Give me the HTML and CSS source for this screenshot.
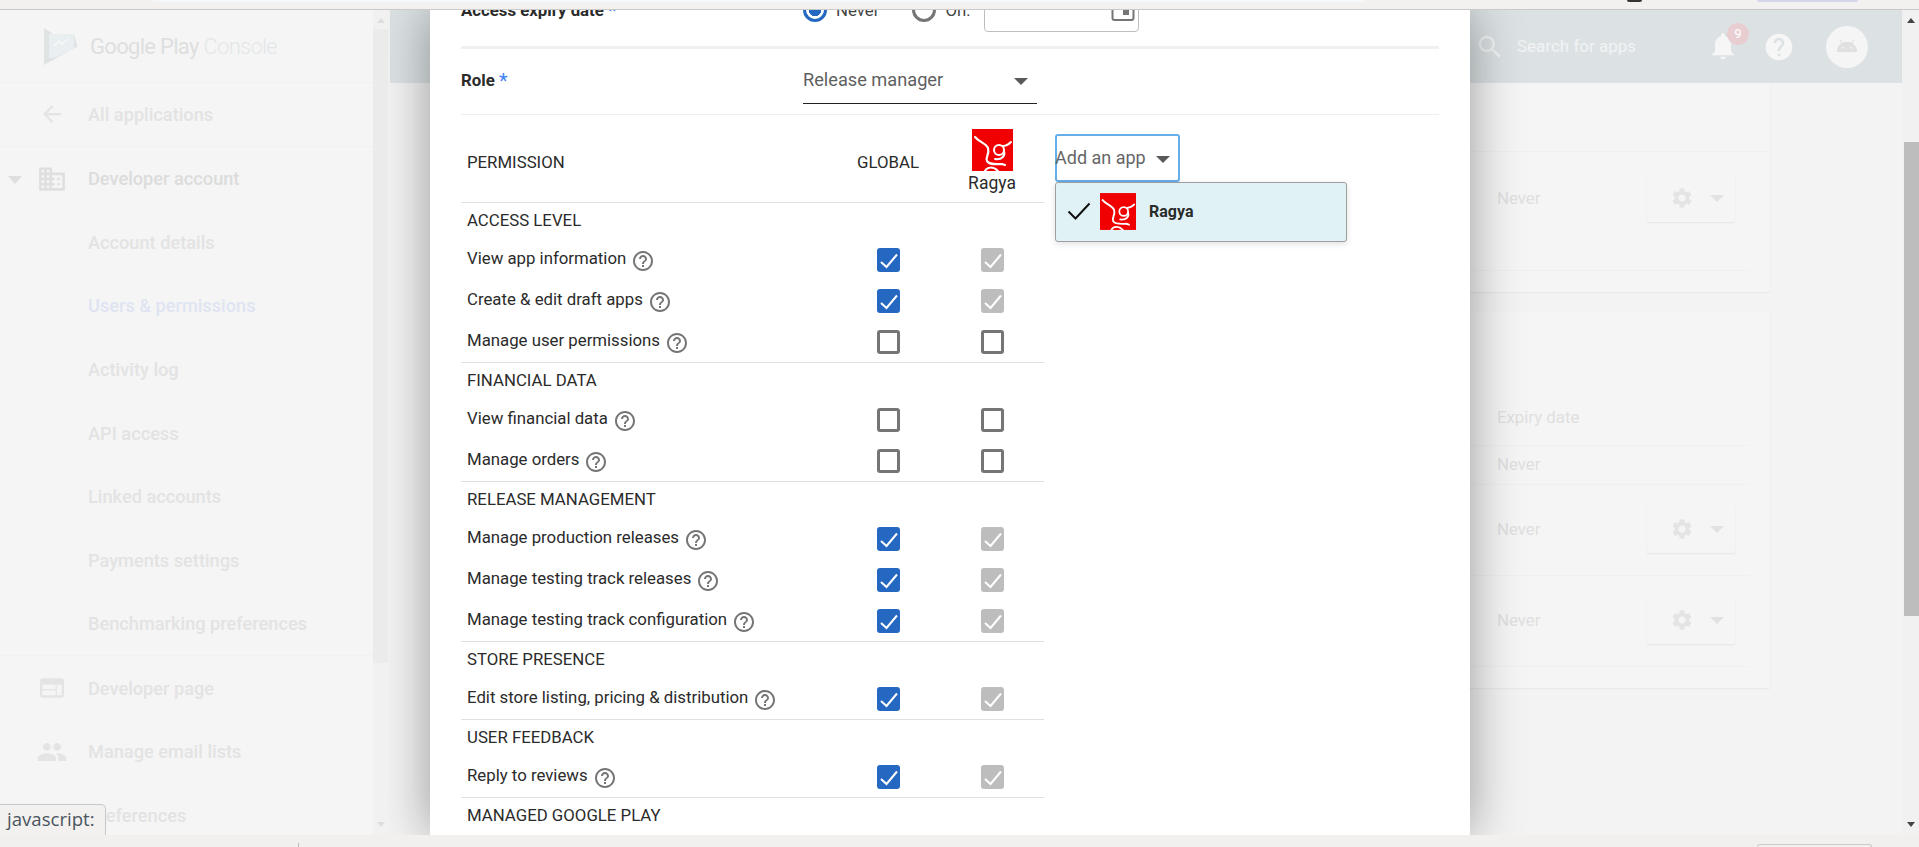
FILE: index.html
```html
<!DOCTYPE html>
<html lang="en">
<head>
    <meta charset="UTF-8">
    <meta name="viewport" content="width=device-width, initial-scale=1.0">
    <title>Users &amp; permissions</title>
    <link rel="stylesheet" href="styles.css">
</head>
<body>
    <svg class="sprite" width="0" height="0">
        <symbol id="help" viewBox="0 0 24 24"><path d="M11 18h2v-2h-2v2zm1-16C6.48 2 2 6.48 2 12s4.48 10 10 10 10-4.48 10-10S17.52 2 12 2zm0 18c-4.41 0-8-3.59-8-8s3.59-8 8-8 8 3.59 8 8-3.59 8-8 8zm0-14c-2.21 0-4 1.79-4 4h2c0-1.1.9-2 2-2s2 .9 2 2c0 2-3 1.75-3 5h2c0-2.25 3-2.5 3-5 0-2.21-1.79-4-4-4z"/></symbol>
        <symbol id="tick" viewBox="0 0 23 24"><path d="M4 14l5.5 5L20 6.5" fill="none" stroke="#fff" stroke-width="2"/></symbol>
        <symbol id="gear" viewBox="0 0 24 24"><path d="M19.14 12.94c.04-.3.06-.61.06-.94 0-.32-.02-.64-.07-.94l2.03-1.58c.18-.14.23-.41.12-.61l-1.92-3.32c-.12-.22-.37-.29-.59-.22l-2.39.96c-.5-.38-1.03-.7-1.62-.94l-.36-2.54c-.04-.24-.24-.41-.48-.41h-3.84c-.24 0-.43.17-.47.41l-.36 2.54c-.59.24-1.13.57-1.62.94l-2.39-.96c-.22-.08-.47 0-.59.22L2.74 8.87c-.12.21-.08.47.12.61l2.03 1.58c-.05.3-.09.63-.09.94s.02.64.07.94l-2.03 1.58c-.18.14-.23.41-.12.61l1.92 3.32c.12.22.37.29.59.22l2.39-.96c.5.38 1.03.7 1.62.94l.36 2.54c.05.24.24.41.48.41h3.84c.24 0 .44-.17.47-.41l.36-2.54c.59-.24 1.13-.56 1.62-.94l2.39.96c.22.08.47 0 .59-.22l1.92-3.32c.12-.22.07-.47-.12-.61l-2.01-1.58zM12 15.6c-1.98 0-3.6-1.62-3.6-3.6s1.62-3.6 3.6-3.6 3.6 1.62 3.6 3.6-1.62 3.6-3.6 3.6z"/></symbol>
        <symbol id="ragya" viewBox="0 0 41 42">
            <rect width="41" height="42" fill="#f00000"/>
            <g fill="none" stroke="#fff" stroke-linecap="round">
                <path d="M3 8c4 5 11 6 13 11 2 6-3 9-1 13 2 4 9 3 15 3l3 1" stroke-width="2.2"/>
                <circle cx="27" cy="21" r="5" stroke-width="2"/>
                <path d="M31 17c4 0 6-2 8-4" stroke-width="2"/>
                <path d="M32 22c1.5 5-2 9-9 8" stroke-width="2"/>
                <path d="M13 42c2-4 8-5 13 0" stroke-width="2"/>
            </g>
        </symbol>
    </svg>

    <div class="browser-top">
        <span class="url-edge"></span>
        <span class="ext-dark"></span>
        <span class="ext-pill"></span>
    </div>

    <div class="main">
        <aside class="sidebar">
            <nav class="side-nav">
                <div class="side-logo">
                    <svg class="play-logo" width="34" height="37" viewBox="0 0 34 37">
                        <path d="M0 0l9 6h21l3.5 12.5L9 32l-9 5z" fill="#e0e3e4"/>
                        <path d="M5 6h25v15L10 30H5z" fill="#e9eef0"/>
                        <path d="M10 18l5-5 3 3 6-5" fill="none" stroke="#f7f8f8" stroke-width="1.5"/>
                    </svg>
                    <span class="logo-text">Google Play <span class="logo-light">Console</span></span>
                </div>
                <a class="side-item side-rule">
                    <svg class="side-icon" width="27" height="27" viewBox="0 0 24 24"><path d="M20 11H7.83l5.59-5.59L12 4l-8 8 8 8 1.41-1.41L7.83 13H20v-2z"/></svg>
                    <span class="side-label">All applications</span>
                </a>
                <a class="side-item side-parent">
                    <span class="side-caret"></span>
                    <svg class="side-icon" width="31" height="31" viewBox="0 0 24 24"><path d="M12 7V3H2v18h20V7H12zM6 19H4v-2h2v2zm0-4H4v-2h2v2zm0-4H4V9h2v2zm0-4H4V5h2v2zm4 12H8v-2h2v2zm0-4H8v-2h2v2zm0-4H8V9h2v2zm0-4H8V5h2v2zm10 12h-8v-2h2v-2h-2v-2h2v-2h-2V9h8v10zm-2-8h-2v2h2v-2zm0 4h-2v2h2v-2z"/></svg>
                    <span class="side-label">Developer account</span>
                </a>
                <a class="side-item"><span class="side-label">Account details</span></a>
                <a class="side-item current"><span class="side-label">Users &amp; permissions</span></a>
                <a class="side-item"><span class="side-label">Activity log</span></a>
                <a class="side-item"><span class="side-label">API access</span></a>
                <a class="side-item"><span class="side-label">Linked accounts</span></a>
                <a class="side-item"><span class="side-label">Payments settings</span></a>
                <a class="side-item side-rule"><span class="side-label">Benchmarking preferences</span></a>
                <a class="side-item">
                    <svg class="side-icon" width="29" height="29" viewBox="0 0 24 24"><path d="M20 4H4c-1.1 0-2 .9-2 2v12c0 1.1.9 2 2 2h16c1.1 0 2-.9 2-2V6c0-1.1-.9-2-2-2zm-5 14H4v-4h11v4zm0-5H4V9h11v4zm5 5h-4V9h4v9z"/></svg>
                    <span class="side-label">Developer page</span>
                </a>
                <a class="side-item">
                    <svg class="side-icon" width="31" height="31" viewBox="0 0 24 24"><path d="M16 11c1.66 0 2.99-1.34 2.99-3S17.66 5 16 5c-1.66 0-3 1.34-3 3s1.34 3 3 3zm-8 0c1.66 0 2.99-1.34 2.99-3S9.66 5 8 5C6.34 5 5 6.34 5 8s1.34 3 3 3zm0 2c-2.33 0-7 1.17-7 3.5V19h14v-2.5c0-2.33-4.67-3.5-7-3.5zm8 0c-.29 0-.62.02-.97.05 1.16.84 1.97 1.97 1.97 3.45V19h6v-2.5c0-2.33-4.67-3.5-7-3.5z"/></svg>
                    <span class="side-label">Manage email lists</span>
                </a>
                <a class="side-item"><span class="side-label">Preferences</span></a>
            </nav>
            <div class="side-scroll">
                <span class="arrow-up faint"></span>
                <span class="side-thumb"></span>
                <span class="arrow-down faint"></span>
            </div>
        </aside>

        <div class="content">
            <header class="topbar">
                <svg class="search-icon" width="30" height="30" viewBox="0 0 24 24"><path d="M15.5 14h-.79l-.28-.27C15.41 12.59 16 11.11 16 9.5 16 5.91 13.09 3 9.5 3S3 5.91 3 9.5 5.91 16 9.5 16c1.61 0 3.09-.59 4.23-1.57l.27.28v.79l5 4.99L20.49 19l-4.99-5zm-6 0C7.01 14 5 11.99 5 9.5S7.01 5 9.5 5 14 7.01 14 9.5 11.99 14 9.5 14z"/></svg>
                <span class="search-text">Search for apps</span>
                <span class="bell">
                    <svg width="32" height="32" viewBox="0 0 24 24"><path d="M12 22c1.1 0 2-.9 2-2h-4c0 1.1.89 2 2 2zm6-6v-5c0-3.07-1.64-5.64-4.5-6.32V4c0-.83-.67-1.5-1.5-1.5s-1.5.67-1.5 1.5v.68C7.63 5.36 6 7.92 6 11v5l-2 2v1h16v-1l-2-2z"/></svg>
                    <span class="badge">9</span>
                </span>
                <svg class="help-fill" width="32" height="32" viewBox="0 0 24 24"><path d="M12 2C6.48 2 2 6.48 2 12s4.48 10 10 10 10-4.48 10-10S17.52 2 12 2zm1 17h-2v-2h2v2zm2.07-7.75l-.9.92C13.45 12.9 13 13.5 13 15h-2v-.5c0-1.1.45-2.1 1.17-2.83l1.24-1.26c.37-.36.59-.86.59-1.41 0-1.1-.9-2-2-2s-2 .9-2 2H8c0-2.21 1.79-4 4-4s4 1.79 4 4c0 .88-.36 1.68-.93 2.25z"/></svg>
                <span class="avatar">
                    <svg width="22" height="14" viewBox="0 0 24 15">
                        <path d="M1 15a11 11 0 0 1 5-9.5L3.8 1.8l1-.6L7.2 5a11 11 0 0 1 9.6 0l2.4-3.8 1 .6L18 5.5a11 11 0 0 1 5 9.5z"/>
                        <circle cx="7.5" cy="10.5" r="1.2" class="android-eye"/>
                        <circle cx="16.5" cy="10.5" r="1.2" class="android-eye"/>
                    </svg>
                </span>
            </header>
            <div class="page-body">
                <section class="card">
                    <div class="card-head"></div>
                    <div class="card-row tall">
                        <span class="never">Never</span>
                        <button class="gear-btn"><svg width="24" height="24"><use href="#gear"/></svg><span class="caret faint-caret"></span></button>
                    </div>
                </section>
                <section class="card second">
                    <div class="card-row short head-row"><span class="never wide">Expiry date</span></div>
                    <div class="card-row short"><span class="never wide">Never</span></div>
                    <div class="card-row mid">
                        <span class="never">Never</span>
                        <button class="gear-btn"><svg width="24" height="24"><use href="#gear"/></svg><span class="caret faint-caret"></span></button>
                    </div>
                    <div class="card-row mid">
                        <span class="never">Never</span>
                        <button class="gear-btn"><svg width="24" height="24"><use href="#gear"/></svg><span class="caret faint-caret"></span></button>
                    </div>
                </section>
            </div>
        </div>

        <div class="page-scroll">
            <span class="arrow-up"></span>
            <span class="page-thumb"></span>
            <span class="arrow-down"></span>
        </div>

        <div class="modal">
            <div class="form-row expiry-row">
                <span class="form-label">Access expiry date <em>*</em></span>
                <span class="radio on"></span>
                <span class="radio-text">Never</span>
                <span class="radio"></span>
                <span class="radio-text last">On:</span>
                <span class="date-box">
                    <svg width="24" height="24" viewBox="0 0 24 24" fill="none"><rect x="1.5" y="-4" width="21" height="26" rx="2" stroke="#757575" stroke-width="2"/><rect x="12" y="11" width="6" height="6" fill="#757575"/></svg>
                </span>
            </div>
            <div class="form-row role-row">
                <span class="form-label">Role <em>*</em></span>
                <span class="role-select">Release manager<span class="caret"></span></span>
            </div>

            <div class="perm-area">
                <div class="perm-table">
                    <div class="perm-head">
                        <span class="perm-name">PERMISSION</span>
                        <span class="col-title">GLOBAL</span>
                        <span class="col-app">
                            <svg width="41" height="42"><use href="#ragya"/></svg>
                            <span>Ragya</span>
                        </span>
                    </div>

                    <div class="perm-group">
                        <div class="group-title">ACCESS LEVEL</div>
                        <div class="perm-row">
                            <span class="perm-name">View app information <svg class="help" width="24" height="24"><use href="#help"/></svg></span>
                            <span class="cb on"><svg width="23" height="24"><use href="#tick"/></svg></span>
                            <span class="cb grey"><svg width="23" height="24"><use href="#tick"/></svg></span>
                        </div>
                        <div class="perm-row">
                            <span class="perm-name">Create &amp; edit draft apps <svg class="help" width="24" height="24"><use href="#help"/></svg></span>
                            <span class="cb on"><svg width="23" height="24"><use href="#tick"/></svg></span>
                            <span class="cb grey"><svg width="23" height="24"><use href="#tick"/></svg></span>
                        </div>
                        <div class="perm-row">
                            <span class="perm-name">Manage user permissions <svg class="help" width="24" height="24"><use href="#help"/></svg></span>
                            <span class="cb"></span>
                            <span class="cb"></span>
                        </div>
                    </div>

                    <div class="perm-group">
                        <div class="group-title">FINANCIAL DATA</div>
                        <div class="perm-row">
                            <span class="perm-name">View financial data <svg class="help" width="24" height="24"><use href="#help"/></svg></span>
                            <span class="cb"></span>
                            <span class="cb"></span>
                        </div>
                        <div class="perm-row">
                            <span class="perm-name">Manage orders <svg class="help" width="24" height="24"><use href="#help"/></svg></span>
                            <span class="cb"></span>
                            <span class="cb"></span>
                        </div>
                    </div>

                    <div class="perm-group">
                        <div class="group-title">RELEASE MANAGEMENT</div>
                        <div class="perm-row">
                            <span class="perm-name">Manage production releases <svg class="help" width="24" height="24"><use href="#help"/></svg></span>
                            <span class="cb on"><svg width="23" height="24"><use href="#tick"/></svg></span>
                            <span class="cb grey"><svg width="23" height="24"><use href="#tick"/></svg></span>
                        </div>
                        <div class="perm-row">
                            <span class="perm-name">Manage testing track releases <svg class="help" width="24" height="24"><use href="#help"/></svg></span>
                            <span class="cb on"><svg width="23" height="24"><use href="#tick"/></svg></span>
                            <span class="cb grey"><svg width="23" height="24"><use href="#tick"/></svg></span>
                        </div>
                        <div class="perm-row">
                            <span class="perm-name">Manage testing track configuration <svg class="help" width="24" height="24"><use href="#help"/></svg></span>
                            <span class="cb on"><svg width="23" height="24"><use href="#tick"/></svg></span>
                            <span class="cb grey"><svg width="23" height="24"><use href="#tick"/></svg></span>
                        </div>
                    </div>

                    <div class="perm-group">
                        <div class="group-title">STORE PRESENCE</div>
                        <div class="perm-row">
                            <span class="perm-name">Edit store listing, pricing &amp; distribution <svg class="help" width="24" height="24"><use href="#help"/></svg></span>
                            <span class="cb on"><svg width="23" height="24"><use href="#tick"/></svg></span>
                            <span class="cb grey"><svg width="23" height="24"><use href="#tick"/></svg></span>
                        </div>
                    </div>

                    <div class="perm-group">
                        <div class="group-title">USER FEEDBACK</div>
                        <div class="perm-row">
                            <span class="perm-name">Reply to reviews <svg class="help" width="24" height="24"><use href="#help"/></svg></span>
                            <span class="cb on"><svg width="23" height="24"><use href="#tick"/></svg></span>
                            <span class="cb grey"><svg width="23" height="24"><use href="#tick"/></svg></span>
                        </div>
                    </div>

                    <div class="perm-group">
                        <div class="group-title">MANAGED GOOGLE PLAY</div>
                    </div>
                </div>

                <div class="add-app">
                    <button class="add-btn">Add an app<span class="caret"></span></button>
                    <div class="add-menu">
                        <svg class="menu-tick" width="24" height="18" viewBox="0 0 24 18"><path d="M1.5 9.5l7 7L22.5 1.5" fill="none" stroke="#111" stroke-width="2"/></svg>
                        <svg width="36" height="37" viewBox="0 0 41 42"><use href="#ragya"/></svg>
                        <span class="menu-name">Ragya</span>
                    </div>
                </div>
            </div>
        </div>

        <div class="status-tip">javascript:</div>
    </div>

    <div class="browser-bottom">
        <span class="tick-mark"></span>
        <span class="tab-edge"></span>
    </div>
</body>
</html>
```

FILE: styles.css
```css
* {
    box-sizing: border-box;
}

body {
    margin: 0;
    height: 100vh;
    display: flex;
    flex-direction: column;
    overflow: hidden;
    font-family: Roboto, Arial, sans-serif;
    background-color: #f3f3f3;
    color: #2b2b2b;
}

.sprite {
    position: absolute;
}

/* browser chrome */
.browser-top {
    height: 10px;
    flex: none;
    display: flex;
    align-items: flex-start;
    background-color: #f2f1ef;
    border-bottom: 1px solid #c9c9c9;
}

.url-edge {
    width: 1212px;
    height: 2px;
    margin-left: 153px;
    background-color: #f5f7f8;
}

.ext-dark {
    width: 15px;
    height: 2px;
    margin-left: 262px;
    border-radius: 0 0 4px 4px;
    background-color: #333;
}

.ext-pill {
    width: 101px;
    height: 2px;
    margin-left: 115px;
    border-radius: 0 0 6px 6px;
    background-color: #d5d6ea;
}

.browser-bottom {
    height: 12px;
    flex: none;
    display: flex;
    align-items: flex-end;
    background-color: #f1f0ee;
}

.tick-mark {
    width: 1px;
    height: 4px;
    margin-left: 298px;
    background-color: #bbb;
}

.tab-edge {
    width: 115px;
    height: 3px;
    margin-left: 1458px;
    border: 1px solid #ccc;
    border-bottom: none;
    border-radius: 4px 4px 0 0;
}

.main {
    flex: 1;
    min-height: 0;
    display: flex;
    position: relative;
    overflow: hidden;
}

/* sidebar */
.sidebar {
    width: 388px;
    flex: none;
    display: flex;
    position: relative;
    z-index: 2;
    background-color: #f5f5f5;
}

.side-nav {
    width: 373px;
    flex: none;
}

.side-logo {
    height: 73px;
    display: flex;
    align-items: center;
    padding-left: 44px;
    border-bottom: 1px solid #f1f1f1;
}

.logo-text {
    margin-left: 12px;
    font-size: 22px;
    letter-spacing: -0.7px;
    color: #dedfdf;
}

.logo-light {
    font-weight: 300;
    color: #e3e7e8;
}

.side-item {
    height: 63.7px;
    display: flex;
    align-items: center;
    padding-left: 88px;
    position: relative;
    font-size: 18.2px;
    color: #e3e3e3;
}

.side-label {
    font-weight: 500;
}

.side-parent .side-label {
    color: #dcdcdc;
}

.side-rule {
    border-bottom: 1px solid #f1f1f1;
}

.current {
    color: #dfe4f2;
}

.side-icon {
    position: absolute;
    left: 52px;
    top: 50%;
    transform: translate(-50%, -50%);
    fill: #e4e4e4;
}

.side-parent .side-icon {
    fill: #dfdfdf;
}

.side-caret {
    position: absolute;
    left: 8px;
    top: 29px;
    border-style: solid;
    border-width: 8px 7.5px 0;
    border-color: #dedede transparent transparent;
}

.side-scroll {
    width: 15px;
    display: flex;
    flex-direction: column;
    align-items: center;
    justify-content: space-between;
    position: relative;
    background-color: #f1f1f1;
    padding: 8px 0;
}

.side-thumb {
    position: absolute;
    left: 0;
    right: 0;
    top: 19px;
    height: 634px;
    background-color: #ebebeb;
}

.arrow-up,
.arrow-down {
    border-style: solid;
    position: relative;
}

.arrow-up {
    border-width: 0 4.5px 5px;
    border-color: transparent transparent #444;
}

.arrow-down {
    border-width: 5px 4.5px 0;
    border-color: #444 transparent transparent;
}

.arrow-up.faint {
    border-bottom-color: #dedede;
}

.arrow-down.faint {
    border-top-color: #dedede;
}

/* page behind the dialog */
.content {
    flex: 1;
    min-width: 0;
    margin-left: 2px;
}

.topbar {
    height: 73px;
    display: flex;
    align-items: center;
    position: relative;
    padding-left: 1085px;
    background-color: #dce2e4;
}

.search-icon {
    fill: #f1f3f4;
}

.search-text {
    margin: -2px 0 0 12px;
    width: 190px;
    font-size: 17px;
    color: #f1f3f4;
}

.bell {
    position: relative;
    display: block;
    width: 32px;
    height: 32px;
    margin-top: -2px;
    fill: #f6f6f6;
}

.badge {
    position: absolute;
    left: 20px;
    top: -7px;
    width: 22px;
    height: 22px;
    border-radius: 50%;
    background-color: #e8cdd1;
    color: #f9f9f9;
    font-size: 13px;
    font-weight: 500;
    line-height: 22px;
    text-align: center;
}

.help-fill {
    margin-left: 24px;
    fill: #f6f6f6;
}

.avatar {
    width: 42px;
    height: 42px;
    margin-left: 31px;
    border-radius: 50%;
    background-color: #f5f5f5;
    display: flex;
    align-items: center;
    justify-content: center;
    fill: #e0e0e0;
    padding-bottom: 4px;
}

.android-eye {
    fill: #f5f5f5;
}

.page-body {
    display: flex;
    flex-direction: column;
    gap: 20px;
    padding: 0 132px 0 60px;
}

.card {
    background-color: #f5f5f5;
    box-shadow: 0 1px 2px rgba(0, 0, 0, 0.05);
    border-radius: 2px;
    padding-bottom: 21px;
}

.card-head {
    height: 69px;
    border-bottom: 1px solid #f0f0f0;
}

.card-row {
    display: flex;
    justify-content: flex-end;
    align-items: center;
    margin-right: 21px;
    padding-right: 14px;
    border-bottom: 1px solid #f0f0f0;
    font-size: 16.8px;
    color: #dfdfdf;
}

.card-row.tall {
    height: 119px;
    padding-bottom: 26px;
}

.card-row.short {
    height: 39px;
    padding-bottom: 2px;
}

.card-row.head-row {
    height: 134px;
    padding-top: 76px;
    padding-bottom: 0;
}

.card-row.mid {
    height: 91px;
    padding-bottom: 2px;
}

.never {
    width: 150px;
}

.never.wide {
    width: 238px;
}

.gear-btn {
    width: 88px;
    height: 48px;
    display: flex;
    align-items: center;
    padding: 0 0 0 23px;
    border: none;
    border-radius: 2px;
    background-color: #f5f5f5;
    box-shadow: 0 1px 2px rgba(0, 0, 0, 0.07);
    fill: #e4e4e4;
}

.caret {
    display: inline-block;
    border-style: solid;
    border-width: 7px 7px 0;
    border-color: #595959 transparent transparent;
}

.faint-caret {
    margin-left: 16px;
    border-top-color: #e2e2e2;
}

.page-scroll {
    width: 17px;
    flex: none;
    display: flex;
    flex-direction: column;
    align-items: center;
    justify-content: space-between;
    position: relative;
    padding: 8px 0 8px 1px;
    background-color: #f1f1f1;
}

.page-thumb {
    position: absolute;
    left: 2px;
    right: 0;
    top: 132px;
    height: 474px;
    background-color: #bdbdbd;
}

/* dialog */
.modal {
    position: absolute;
    left: 430px;
    top: 0;
    bottom: 0;
    width: 1040px;
    padding: 0 31px;
    overflow: hidden;
    background-color: #fff;
    box-shadow: 0 0 48px rgba(0, 0, 0, 0.38);
    z-index: 1;
}

.form-row {
    display: flex;
    align-items: center;
    font-size: 16.8px;
}

.form-label {
    width: 342px;
    flex: none;
    font-weight: 700;
}

.form-label em {
    position: relative;
    top: 2px;
    font-style: normal;
    font-weight: 400;
    font-size: 20px;
    line-height: 0;
    color: #4285f4;
}

.expiry-row {
    height: 64px;
    margin-top: -28px;
    padding-bottom: 8px;
}

.radio {
    width: 24px;
    height: 24px;
    flex: none;
    border: 3px solid #757575;
    border-radius: 50%;
}

.radio.on {
    border-color: #2568c2;
    background: radial-gradient(circle, #2568c2 0 6px, #fff 6.5px);
}

.radio-text {
    margin-left: 9px;
    margin-right: 33px;
    color: #444;
}

.radio-text.last {
    margin-right: 14px;
}

.date-box {
    width: 155px;
    height: 44px;
    padding: 0 3px 9px 0;
    display: flex;
    align-items: flex-end;
    justify-content: flex-end;
    border: 1px solid #bdbdbd;
    border-radius: 4px;
}

.role-row {
    height: 69px;
    border-top: 3px solid #f0f0f0;
    border-bottom: 1px solid #eee;
}

.role-row .form-label {
    padding-bottom: 4px;
}

.role-select {
    width: 234px;
    height: 55px;
    align-self: flex-start;
    display: flex;
    align-items: center;
    justify-content: space-between;
    padding: 6px 9px 0 0;
    border-bottom: 1px solid #212121;
    color: #5f5f5f;
    font-size: 18.2px;
}

.role-select .caret {
    margin-top: 4px;
}

.perm-area {
    display: flex;
    align-items: flex-start;
}

.perm-table {
    width: 583px;
    flex: none;
}

.perm-head,
.perm-row {
    display: grid;
    grid-template-columns: 1fr 104px 104px;
    align-items: center;
    font-size: 16.8px;
}

.perm-head {
    height: 88px;
    border-bottom: 1px solid #e0e0e0;
}

.perm-name {
    padding-left: 6px;
    display: flex;
    align-items: center;
    gap: 5px;
}

.perm-row .perm-name {
    margin-top: -3px;
}

.perm-head .perm-name,
.col-title {
    margin-top: 6px;
}

.col-title {
    text-align: center;
}

.col-app {
    display: flex;
    flex-direction: column;
    align-items: center;
    margin-top: 5px;
    font-size: 17.5px;
}

.col-app svg {
    display: block;
}

.col-app span {
    margin-top: 2px;
}

.perm-group {
    border-bottom: 1px solid #e0e0e0;
}

.perm-group:last-child {
    border-bottom: none;
}

.group-title {
    height: 36px;
    padding: 7px 0 0 6px;
    font-size: 16.8px;
    line-height: 20px;
}

.perm-row {
    height: 41px;
}

.help {
    fill: #757575;
    margin-top: 5px;
}

.cb {
    width: 23px;
    height: 24px;
    justify-self: center;
    border: 3px solid #757575;
    border-radius: 3px;
}

.cb svg {
    display: block;
}

.cb.on,
.cb.grey {
    border: none;
}

.cb.on {
    background-color: #2568c2;
}

.cb.grey {
    background-color: #bdbdbd;
}

.add-app {
    position: relative;
    margin: 19px 0 0 11px;
}

.add-btn {
    width: 125px;
    height: 48px;
    display: flex;
    align-items: center;
    gap: 10px;
    padding: 0 0 2px 0;
    border: none;
    border-radius: 3px;
    box-shadow: inset 0 0 0 2px #64aeea;
    background-color: #fff;
    color: #666;
    font-family: inherit;
    font-size: 18px;
}

.add-btn .caret {
    margin-top: 4px;
}

.add-menu {
    position: absolute;
    left: 0;
    top: 48px;
    width: 292px;
    height: 60px;
    display: flex;
    align-items: center;
    padding: 0 0 2px 11px;
    border: 1px solid #9e9e9e;
    border-radius: 3px;
    background-color: #e1f2f6;
    box-shadow: 0 2px 6px rgba(0, 0, 0, 0.12);
}

.menu-tick {
    margin-right: 9px;
}

.menu-name {
    margin-left: 13px;
    font-size: 16px;
    font-weight: 700;
}

.status-tip {
    position: absolute;
    left: 0;
    bottom: 0;
    z-index: 3;
    width: 106px;
    height: 31px;
    padding-left: 7px;
    border: 1px solid #c8c8c8;
    border-left: none;
    border-bottom: none;
    border-radius: 0 5px 0 0;
    background-color: #f2f1ef;
    color: #4a5560;
    font-family: "Open Sans", sans-serif;
    font-size: 18.6px;
    line-height: 27px;
}
```
